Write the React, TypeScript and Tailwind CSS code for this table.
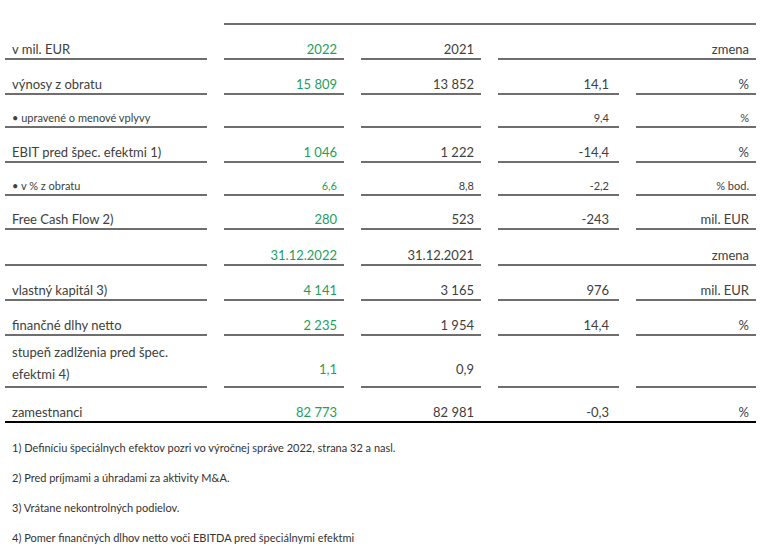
import React from "react";

type Row = {
  h: string;
  label: string;
  a: string;
  b: string;
  c?: string;
  d?: string;
  merged?: string;
  small?: boolean;
};

const rows: Row[] = [
  { h: "h-[35px]", label: "v mil. EUR", a: "2022", b: "2021", merged: "zmena" },
  { h: "h-[35px]", label: "výnosy z obratu", a: "15 809", b: "13 852", c: "14,1", d: "%" },
  { h: "h-[33px]", label: "• upravené o menové vplyvy", a: "", b: "", c: "9,4", d: "%", small: true },
  { h: "h-[35px]", label: "EBIT pred špec. efektmi 1)", a: "1 046", b: "1 222", c: "-14,4", d: "%" },
  { h: "h-[33px]", label: "• v % z obratu", a: "6,6", b: "8,8", c: "-2,2", d: "% bod.", small: true },
  { h: "h-[34px]", label: "Free Cash Flow 2)", a: "280", b: "523", c: "-243", d: "mil. EUR" },
  { h: "h-[36px]", label: "", a: "31.12.2022", b: "31.12.2021", merged: "zmena" },
  { h: "h-[35px]", label: "vlastný kapitál 3)", a: "4 141", b: "3 165", c: "976", d: "mil. EUR" },
  { h: "h-[35px]", label: "finančné dlhy netto", a: "2 235", b: "1 954", c: "14,4", d: "%" },
];

const line = "border-b-2 border-[#6e6e6e]";

function Cell({
  h,
  small,
  children,
  className = "",
}: {
  h: string;
  small?: boolean;
  children?: React.ReactNode;
  className?: string;
}) {
  return (
    <div
      className={`${h} ${line} flex items-end whitespace-nowrap pb-[1px] ${
        small ? "text-[11px] leading-[14px]" : "text-[13px] leading-[16px]"
      } ${className}`}
    >
      {children}
    </div>
  );
}

export default function App() {
  return (
    <div className="w-[782px] h-[550px] bg-white text-[#404040] font-['Lato','Liberation_Sans',sans-serif]">
      <div className="pl-[5px] grid grid-cols-[202px_120px_120px_121px_120px] gap-x-[17px]">
        <div className="col-start-2 col-span-4 h-[25px] border-b-2 border-[#6e6e6e]" />
        {rows.map((r, i) => (
          <React.Fragment key={i}>
            <Cell h={r.h} small={r.small} className="pl-[7px]">
              {r.label}
            </Cell>
            <Cell h={r.h} small={r.small} className="justify-end pr-[7px] text-[#1e9e5c]">
              {r.a}
            </Cell>
            <Cell h={r.h} small={r.small} className="justify-end pr-[7px]">
              {r.b}
            </Cell>
            {r.merged !== undefined ? (
              <Cell h={r.h} small={r.small} className="col-span-2 justify-end pr-[7px]">
                {r.merged}
              </Cell>
            ) : (
              <>
                <Cell h={r.h} small={r.small} className="justify-end pr-[10px]">
                  {r.c}
                </Cell>
                <Cell h={r.h} small={r.small} className="justify-end pr-[7px]">
                  {r.d}
                </Cell>
              </>
            )}
          </React.Fragment>
        ))}
        {/* stupeň zadlženia */}
        <div className={`h-[52px] ${line} flex items-end pl-[7px] pb-[1px] text-[13px] leading-[22px]`}>
          <span>
            stupeň zadlženia pred špec.
            <br />
            efektmi 4)
          </span>
        </div>
        <div className={`h-[52px] ${line} flex items-end justify-end pr-[7px] pb-[9px] text-[13px] leading-[16px] text-[#1e9e5c]`}>
          1,1
        </div>
        <div className={`h-[52px] ${line} flex items-end justify-end pr-[7px] pb-[9px] text-[13px] leading-[16px]`}>
          0,9
        </div>
        <div className={`h-[52px] ${line}`} />
        <div className={`h-[52px] ${line}`} />
        {/* zamestnanci */}
        <div className="h-[33px] flex items-end pl-[7px] pb-[1px] text-[13px] leading-[16px]">zamestnanci</div>
        <div className="h-[33px] flex items-end justify-end pr-[7px] pb-[1px] text-[13px] leading-[16px] text-[#1e9e5c]">
          82 773
        </div>
        <div className="h-[33px] flex items-end justify-end pr-[7px] pb-[1px] text-[13px] leading-[16px]">82 981</div>
        <div className="h-[33px] flex items-end justify-end pr-[10px] pb-[1px] text-[13px] leading-[16px]">-0,3</div>
        <div className="h-[33px] flex items-end justify-end pr-[7px] pb-[1px] text-[13px] leading-[16px]">%</div>
        <div className="col-span-5 h-[2px] bg-black" />
      </div>
      <div className="pl-[12px] pt-[10px] text-[11px] leading-[30px] text-[#333333]">
        <div>1) Definíciu špeciálnych efektov pozri vo výročnej správe 2022, strana 32 a nasl.</div>
        <div>2) Pred príjmami a úhradami za aktivity M&amp;A.</div>
        <div>3) Vrátane nekontrolných podielov.</div>
        <div>4) Pomer finančných dlhov netto voči EBITDA pred špeciálnymi efektmi</div>
      </div>
    </div>
  );
}
